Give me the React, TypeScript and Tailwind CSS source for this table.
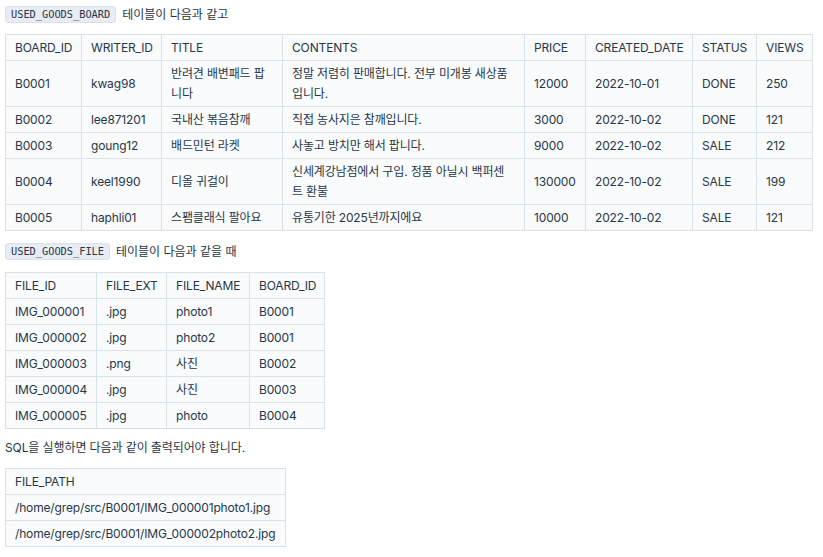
import React from "react";

const font = { fontFamily: 'Inter, "Noto Sans CJK KR", sans-serif' };

function Chip({ children }: { children: React.ReactNode }) {
  return (
    <span className="inline-flex items-center h-[17px] px-[5px] border border-[#d7e2eb] bg-[#e9ecf3] rounded-[3px] text-[10.3px] text-[#263747] font-['DejaVu_Sans_Mono',monospace] mr-[6px]">
      {children}
    </span>
  );
}

function Table({ widths, rows }: { widths: number[]; rows: string[][] }) {
  const total = widths.reduce((a, b) => a + b, 0);
  return (
    <table
      className="border-collapse table-fixed text-[12px] leading-[20px] tracking-[-0.15px] text-[#263747]"
      style={{ width: total }}
    >
      <colgroup>
        {widths.map((w, i) => (
          <col key={i} style={{ width: w }} />
        ))}
      </colgroup>
      <tbody>
        {rows.map((r, i) => (
          <tr key={i}>
            {r.map((c, j) => (
              <td
                key={j}
                className="border border-[#d7e2eb] bg-[#fafbfd] px-[9px] py-[2.5px] align-middle"
              >
                {c}
              </td>
            ))}
          </tr>
        ))}
      </tbody>
    </table>
  );
}

export default function App() {
  const board = [
    ["BOARD_ID", "WRITER_ID", "TITLE", "CONTENTS", "PRICE", "CREATED_DATE", "STATUS", "VIEWS"],
    ["B0001", "kwag98", "반려견 배변패드 팝니다", "정말 저렴히 판매합니다. 전부 미개봉 새상품입니다.", "12000", "2022-10-01", "DONE", "250"],
    ["B0002", "lee871201", "국내산 볶음참깨", "직접 농사지은 참깨입니다.", "3000", "2022-10-02", "DONE", "121"],
    ["B0003", "goung12", "배드민턴 라켓", "사놓고 방치만 해서 팝니다.", "9000", "2022-10-02", "SALE", "212"],
    ["B0004", "keel1990", "디올 귀걸이", "신세계강남점에서 구입. 정품 아닐시 백퍼센트 환불", "130000", "2022-10-02", "SALE", "199"],
    ["B0005", "haphli01", "스팸클래식 팔아요", "유통기한 2025년까지에요", "10000", "2022-10-02", "SALE", "121"],
  ];
  const file = [
    ["FILE_ID", "FILE_EXT", "FILE_NAME", "BOARD_ID"],
    ["IMG_000001", ".jpg", "photo1", "B0001"],
    ["IMG_000002", ".jpg", "photo2", "B0001"],
    ["IMG_000003", ".png", "사진", "B0002"],
    ["IMG_000004", ".jpg", "사진", "B0003"],
    ["IMG_000005", ".jpg", "photo", "B0004"],
  ];
  const result = [
    ["FILE_PATH"],
    ["/home/grep/src/B0001/IMG_000001photo1.jpg"],
    ["/home/grep/src/B0001/IMG_000002photo2.jpg"],
  ];
  return (
    <div className="bg-white w-[823px] h-[557px] pl-[5px] pt-[6px] text-[#263747]" style={font}>
      <div className="flex items-center h-[17px] text-[12px]">
        <Chip>USED_GOODS_BOARD</Chip>
        <span>테이블이 다음과 같고</span>
      </div>
      <div className="mt-[11px]">
        <Table widths={[76, 80, 121, 242, 61, 107, 64, 56]} rows={board} />
      </div>
      <div className="flex items-center h-[17px] text-[12px] mt-[12px]">
        <Chip>USED_GOODS_FILE</Chip>
        <span>테이블이 다음과 같을 때</span>
      </div>
      <div className="mt-[12px]">
        <Table widths={[91, 70, 83, 75]} rows={file} />
      </div>
      <div className="flex items-center h-[18px] text-[12px] mt-[10px] tracking-[-0.1px]">
        SQL을 실행하면 다음과 같이 출력되어야 합니다.
      </div>
      <div className="mt-[11px]">
        <Table widths={[280]} rows={result} />
      </div>
    </div>
  );
}
